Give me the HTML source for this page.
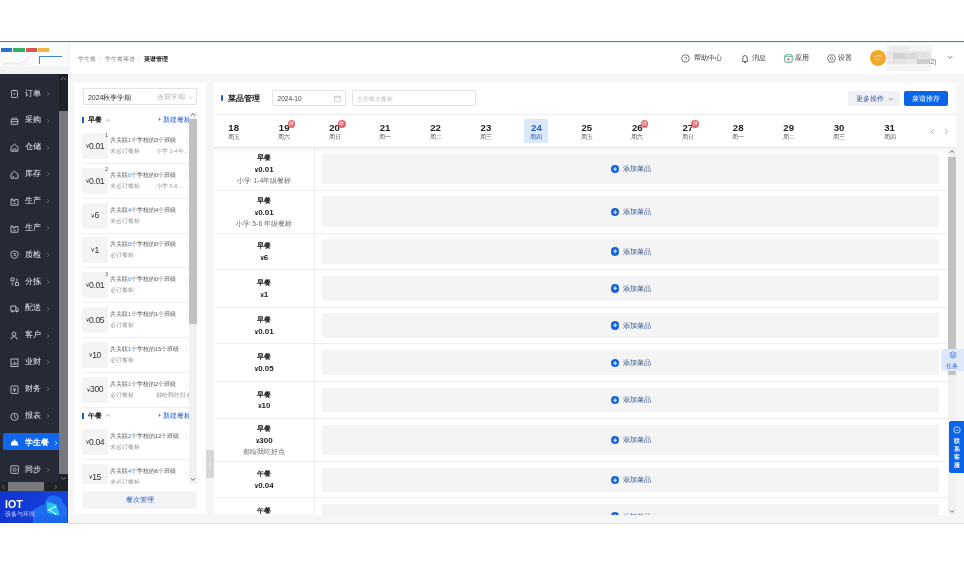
<!DOCTYPE html><html><head><meta charset="utf-8"><style>
*{box-sizing:border-box;margin:0;padding:0}
html,body{width:964px;height:565px;overflow:hidden;background:#fff;font-family:"Liberation Sans", sans-serif;}
.ab{position:absolute}
.t{position:absolute;white-space:nowrap;line-height:1}
</style></head><body><div id="root" style="position:absolute;left:0;top:0;width:964px;height:565px;overflow:hidden;will-change:transform">
<div class="ab" style="left:0;top:41px;width:964px;height:1px;background:#5e7a70"></div><div class="ab" style="left:0;top:42px;width:964px;height:1px;background:#eefaf7"></div><div class="ab" style="left:0;top:43px;width:68px;height:30px;background:#f9fbfc"></div>
<div class="ab" style="left:1px;top:48px;width:11px;height:3.6px;background:#2a72d0"></div>
<div class="ab" style="left:12.7px;top:48px;width:12px;height:3.6px;background:#2fb060"></div>
<div class="ab" style="left:26px;top:48px;width:11px;height:3.6px;background:#dc5555"></div>
<div class="ab" style="left:38px;top:48px;width:11px;height:3.6px;background:#eeb640"></div>
<div class="ab" style="left:39px;top:55.8px;width:23px;height:1px;background:#3f86cc"></div><svg class="ab" style="left:0;top:52px" width="68" height="14" viewBox="0 0 68 14"><path d="M2 12 L10 11 L18 11.5 L26 10 L30 4" fill="none" stroke="#e9c9c9" stroke-width="0.5"/><path d="M2 12.5 L12 12 L22 12.5 L34 12" fill="none" stroke="#dde3ea" stroke-width="0.5"/></svg>
<div class="ab" style="left:39px;top:56px;width:1px;height:7.5px;background:#3f86cc"></div>
<div class="ab" style="left:0;top:66px;width:68px;height:8px;background:#f3f4f5"></div>
<div class="ab" style="left:67.5px;top:42px;width:1px;height:31px;background:#eef0f2"></div>
<div class="t" style="left:77.7px;top:55.8px;font-size:6px;color:#8c8c8c">学生餐</div>
<div class="t" style="left:99px;top:55.8px;font-size:6px;color:#c8c8c8">/</div>
<div class="t" style="left:105px;top:55.8px;font-size:6px;color:#8c8c8c">学生餐菜谱</div>
<div class="t" style="left:138px;top:55.8px;font-size:6px;color:#c8c8c8">/</div>
<div class="t" style="left:144px;top:55.8px;font-size:6px;color:#222;font-weight:bold">菜谱管理</div>
<svg class="ab" style="left:681px;top:54px" width="9" height="9" viewBox="0 0 9 9"><circle cx="4.5" cy="4.5" r="3.8" fill="none" stroke="#555" stroke-width="0.8"/><text x="4.5" y="6.6" font-size="5.5" text-anchor="middle" fill="#555" font-family="Liberation Sans">?</text></svg>
<div class="t" style="left:694.4px;top:55px;font-size:6.9px;color:#333">帮助中心</div>
<svg class="ab" style="left:741px;top:53.5px" width="8" height="10" viewBox="0 0 8 10"><path d="M1.2 7.5 L1.8 6.5 L1.8 4 Q1.8 1.5 4 1.5 Q6.2 1.5 6.2 4 L6.2 6.5 L6.8 7.5 Z" fill="none" stroke="#444" stroke-width="0.8"/><path d="M3 8.6 L5 8.6" stroke="#444" stroke-width="0.8"/></svg>
<div class="t" style="left:752px;top:55px;font-size:6.6px;color:#333">消息</div>
<svg class="ab" style="left:783.5px;top:54px" width="9" height="9" viewBox="0 0 9 9"><rect x="0.8" y="0.8" width="7.4" height="7.4" rx="1.2" fill="none" stroke="#3fa08a" stroke-width="0.9"/><line x1="0.8" y1="2.6" x2="8.2" y2="2.6" stroke="#3fa08a" stroke-width="0.7"/><circle cx="4.5" cy="5.4" r="1.1" fill="#d84a5a"/></svg>
<div class="t" style="left:794.7px;top:55px;font-size:6.9px;color:#333">应用</div>
<svg class="ab" style="left:826.5px;top:53.8px" width="9" height="9" viewBox="0 0 9 9"><path d="M2.3 0.9 L6.7 0.9 L8.6 4.5 L6.7 8.1 L2.3 8.1 L0.4 4.5 Z" fill="none" stroke="#555" stroke-width="0.8"/><circle cx="4.5" cy="4.5" r="1.4" fill="none" stroke="#555" stroke-width="0.8"/></svg>
<div class="t" style="left:838px;top:55px;font-size:6.9px;color:#333">设置</div>
<div class="ab" style="left:869.8px;top:50.3px;width:16px;height:16px;border-radius:50%;background:#f4a829"></div>
<svg class="ab" style="left:869.8px;top:50.3px" width="16" height="16" viewBox="0 0 16 16"><path d="M4 7 Q8 4 12 6.5" fill="none" stroke="#fbe0b0" stroke-width="1"/><path d="M5 9.5 Q8 8 10 10" fill="none" stroke="#f8d49a" stroke-width="0.8"/></svg>
<div class="ab" style="left:886px;top:45px;width:46px;height:26px;background:#f3f4f3"></div>
<div class="ab" style="left:889px;top:45.5px;width:20px;height:6px;background:#eceeec"></div>
<div class="ab" style="left:887px;top:51px;width:44px;height:13px;background:#e8e8e8"></div>
<div class="ab" style="left:893px;top:52.5px;width:12px;height:6px;background:#d3d3d3"></div>
<div class="ab" style="left:905px;top:52.5px;width:12px;height:6px;background:#dadada"></div>
<div class="ab" style="left:917px;top:52px;width:10px;height:6px;background:#e2e2e2"></div>
<div class="ab" style="left:893px;top:58.5px;width:12px;height:5px;background:#e3e3e3"></div>
<div class="ab" style="left:917px;top:59px;width:13px;height:5px;background:#cdcdcd"></div>
<div class="ab" style="left:887px;top:64px;width:45px;height:6px;background:#f5f5f5"></div>
<div class="t" style="left:930.5px;top:58.5px;font-size:6.8px;color:#777">2)</div>
<svg class="ab" style="left:946.5px;top:55.3px" width="6" height="5" viewBox="0 0 6 5"><path d="M0.8 1.2 L3 3.4 L5.2 1.2" fill="none" stroke="#555" stroke-width="0.8"/></svg>
<div class="ab" style="left:68px;top:74px;width:896px;height:449px;background:#f6f6f7"></div><div class="ab" style="left:68px;top:522.6px;width:896px;height:1px;background:#dedede"></div><div class="ab" style="left:0;top:74px;width:68px;height:417px;background:#252a36;overflow:hidden"><svg class="ab" style="left:10.3px;top:15.20px" width="9" height="9.4" viewBox="0 0 9 9.4"><rect x="1.5" y="1.5" width="6" height="7" rx="0.8" fill="none" stroke="#d8dbe2" stroke-width="0.8"/><path d="M3.2 0.8 V2.2 M5.8 0.8 V2.2" stroke="#d8dbe2" stroke-width="0.8"/><path d="M3.8 4 L5.6 5 L3.8 6 Z" fill="#d8dbe2"/></svg><div class="t" style="left:24.8px;top:15.60px;font-size:8px;color:#eceef2;font-weight:normal">订单</div><svg class="ab" style="left:45.8px;top:16.80px" width="4" height="6" viewBox="0 0 4 6"><path d="M1 1 L3 3 L1 5" fill="none" stroke="#6f7480" stroke-width="0.7"/></svg><svg class="ab" style="left:10.3px;top:42.06px" width="9" height="9.4" viewBox="0 0 9 9.4"><path d="M1.2 3.2 H7.8 V8.3 H1.2 Z M1.2 5.6 H7.8" fill="none" stroke="#d8dbe2" stroke-width="0.8"/><path d="M3 3.2 V1.2 M6 3.2 V1.2" stroke="#d8dbe2" stroke-width="0.8"/></svg><div class="t" style="left:24.8px;top:42.46px;font-size:8px;color:#eceef2;font-weight:normal">采购</div><svg class="ab" style="left:45.8px;top:43.66px" width="4" height="6" viewBox="0 0 4 6"><path d="M1 1 L3 3 L1 5" fill="none" stroke="#6f7480" stroke-width="0.7"/></svg><svg class="ab" style="left:10.3px;top:68.92px" width="9" height="9.4" viewBox="0 0 9 9.4"><path d="M1 8.2 V4 L4.5 1.2 L8 4 V8.2 Z" fill="none" stroke="#d8dbe2" stroke-width="0.8"/><path d="M3 8.2 V6 H6 V8.2" fill="none" stroke="#d8dbe2" stroke-width="0.7"/></svg><div class="t" style="left:24.8px;top:69.32px;font-size:8px;color:#eceef2;font-weight:normal">仓储</div><svg class="ab" style="left:45.8px;top:70.52px" width="4" height="6" viewBox="0 0 4 6"><path d="M1 1 L3 3 L1 5" fill="none" stroke="#6f7480" stroke-width="0.7"/></svg><svg class="ab" style="left:10.3px;top:95.78px" width="9" height="9.4" viewBox="0 0 9 9.4"><path d="M1 8.2 V4 L4.5 1.2 L8 4 V8.2 Z" fill="none" stroke="#d8dbe2" stroke-width="0.8"/><circle cx="3.5" cy="6.5" r="0.6" fill="#d8dbe2"/></svg><div class="t" style="left:24.8px;top:96.18px;font-size:8px;color:#eceef2;font-weight:normal">库存</div><svg class="ab" style="left:45.8px;top:97.38px" width="4" height="6" viewBox="0 0 4 6"><path d="M1 1 L3 3 L1 5" fill="none" stroke="#6f7480" stroke-width="0.7"/></svg><svg class="ab" style="left:10.3px;top:122.64px" width="9" height="9.4" viewBox="0 0 9 9.4"><path d="M1 8.2 V2 H3 V4 H5 V2.5 H8 V8.2 Z" fill="none" stroke="#d8dbe2" stroke-width="0.8"/><path d="M3 6.3 H6" stroke="#d8dbe2" stroke-width="0.7"/></svg><div class="t" style="left:24.8px;top:123.04px;font-size:8px;color:#eceef2;font-weight:normal">生产</div><svg class="ab" style="left:45.8px;top:124.24px" width="4" height="6" viewBox="0 0 4 6"><path d="M1 1 L3 3 L1 5" fill="none" stroke="#6f7480" stroke-width="0.7"/></svg><svg class="ab" style="left:10.3px;top:149.50px" width="9" height="9.4" viewBox="0 0 9 9.4"><path d="M1 8.2 V2 H3 V4 H5 V2.5 H8 V8.2 Z" fill="none" stroke="#d8dbe2" stroke-width="0.8"/><path d="M3 6.3 H6" stroke="#d8dbe2" stroke-width="0.7"/></svg><div class="t" style="left:24.8px;top:149.90px;font-size:8px;color:#eceef2;font-weight:normal">生产</div><svg class="ab" style="left:45.8px;top:151.10px" width="4" height="6" viewBox="0 0 4 6"><path d="M1 1 L3 3 L1 5" fill="none" stroke="#6f7480" stroke-width="0.7"/></svg><svg class="ab" style="left:10.3px;top:176.36px" width="9" height="9.4" viewBox="0 0 9 9.4"><path d="M4.5 0.9 L8 2.2 V5 Q8 7.6 4.5 8.6 Q1 7.6 1 5 V2.2 Z" fill="none" stroke="#d8dbe2" stroke-width="0.8"/><path d="M3.2 3.5 H5.6 L4 5.6 H5.8" fill="none" stroke="#d8dbe2" stroke-width="0.7"/></svg><div class="t" style="left:24.8px;top:176.76px;font-size:8px;color:#eceef2;font-weight:normal">质检</div><svg class="ab" style="left:45.8px;top:177.96px" width="4" height="6" viewBox="0 0 4 6"><path d="M1 1 L3 3 L1 5" fill="none" stroke="#6f7480" stroke-width="0.7"/></svg><svg class="ab" style="left:10.3px;top:203.22px" width="9" height="9.4" viewBox="0 0 9 9.4"><path d="M1 1 H4 V4 H1 Z M5.5 5.5 H8.5 V8.5 H5.5 Z" fill="none" stroke="#d8dbe2" stroke-width="0.8"/><path d="M6 1.5 L8 3 L6 4.5 M3.5 5.5 L1.5 7 L3.5 8.5" fill="none" stroke="#d8dbe2" stroke-width="0.7"/></svg><div class="t" style="left:24.8px;top:203.62px;font-size:8px;color:#eceef2;font-weight:normal">分拣</div><svg class="ab" style="left:45.8px;top:204.82px" width="4" height="6" viewBox="0 0 4 6"><path d="M1 1 L3 3 L1 5" fill="none" stroke="#6f7480" stroke-width="0.7"/></svg><svg class="ab" style="left:10.3px;top:230.08px" width="9" height="9.4" viewBox="0 0 9 9.4"><path d="M0.8 2 H5.8 V7 H0.8 Z M5.8 4 H7.8 L8.6 5.5 V7 H5.8" fill="none" stroke="#d8dbe2" stroke-width="0.8"/><circle cx="2.5" cy="7.6" r="0.8" fill="#d8dbe2"/><circle cx="6.8" cy="7.6" r="0.8" fill="#d8dbe2"/></svg><div class="t" style="left:24.8px;top:230.48px;font-size:8px;color:#eceef2;font-weight:normal">配送</div><svg class="ab" style="left:45.8px;top:231.68px" width="4" height="6" viewBox="0 0 4 6"><path d="M1 1 L3 3 L1 5" fill="none" stroke="#6f7480" stroke-width="0.7"/></svg><svg class="ab" style="left:10.3px;top:256.94px" width="9" height="9.4" viewBox="0 0 9 9.4"><circle cx="4" cy="3" r="1.9" fill="none" stroke="#d8dbe2" stroke-width="0.8"/><path d="M0.9 8.5 Q1.2 5.6 4 5.6 Q6.8 5.6 7.1 8.5" fill="none" stroke="#d8dbe2" stroke-width="0.8"/></svg><div class="t" style="left:24.8px;top:257.34px;font-size:8px;color:#eceef2;font-weight:normal">客户</div><svg class="ab" style="left:45.8px;top:258.54px" width="4" height="6" viewBox="0 0 4 6"><path d="M1 1 L3 3 L1 5" fill="none" stroke="#6f7480" stroke-width="0.7"/></svg><svg class="ab" style="left:10.3px;top:283.80px" width="9" height="9.4" viewBox="0 0 9 9.4"><rect x="1" y="1" width="7" height="7.5" fill="none" stroke="#d8dbe2" stroke-width="0.8"/><path d="M3 7 V5 M4.5 7 V3.5 M6 7 V4.5" stroke="#d8dbe2" stroke-width="0.7"/></svg><div class="t" style="left:24.8px;top:284.20px;font-size:8px;color:#eceef2;font-weight:normal">业财</div><svg class="ab" style="left:45.8px;top:285.40px" width="4" height="6" viewBox="0 0 4 6"><path d="M1 1 L3 3 L1 5" fill="none" stroke="#6f7480" stroke-width="0.7"/></svg><svg class="ab" style="left:10.3px;top:310.66px" width="9" height="9.4" viewBox="0 0 9 9.4"><rect x="1" y="1" width="7" height="7.5" rx="0.8" fill="none" stroke="#d8dbe2" stroke-width="0.8"/><path d="M3 3 L4.5 4.8 L6 3 M3 5 H6 M4.5 4.8 V7" fill="none" stroke="#d8dbe2" stroke-width="0.7"/></svg><div class="t" style="left:24.8px;top:311.06px;font-size:8px;color:#eceef2;font-weight:normal">财务</div><svg class="ab" style="left:45.8px;top:312.26px" width="4" height="6" viewBox="0 0 4 6"><path d="M1 1 L3 3 L1 5" fill="none" stroke="#6f7480" stroke-width="0.7"/></svg><svg class="ab" style="left:10.3px;top:337.52px" width="9" height="9.4" viewBox="0 0 9 9.4"><circle cx="4.5" cy="4.8" r="3.6" fill="none" stroke="#d8dbe2" stroke-width="0.8"/><path d="M4.5 2.5 V4.8 L6 6.2" fill="none" stroke="#d8dbe2" stroke-width="0.8"/></svg><div class="t" style="left:24.8px;top:337.92px;font-size:8px;color:#eceef2;font-weight:normal">报表</div><svg class="ab" style="left:45.8px;top:339.12px" width="4" height="6" viewBox="0 0 4 6"><path d="M1 1 L3 3 L1 5" fill="none" stroke="#6f7480" stroke-width="0.7"/></svg><div class="ab" style="left:3.4px;top:359.3px;width:60px;height:17.2px;background:#1266ec;border-radius:1.5px"></div><svg class="ab" style="left:10.3px;top:364.38px" width="9" height="9.4" viewBox="0 0 9 9.4"><path d="M0.8 7.6 H8.2 Q8.2 2.4 4.5 2.4 Q0.8 2.4 0.8 7.6 Z" fill="#fff"/><circle cx="4.5" cy="2" r="0.7" fill="#fff"/></svg><div class="t" style="left:24.8px;top:364.78px;font-size:8px;color:#fff;font-weight:bold">学生餐</div><svg class="ab" style="left:53.8px;top:365.98px" width="4" height="6" viewBox="0 0 4 6"><path d="M1 1 L3 3 L1 5" fill="none" stroke="#fff" stroke-width="0.7"/></svg><svg class="ab" style="left:10.3px;top:391.24px" width="9" height="9.4" viewBox="0 0 9 9.4"><rect x="0.8" y="0.8" width="7.6" height="7.6" rx="0.8" fill="none" stroke="#d8dbe2" stroke-width="0.8"/><circle cx="4.6" cy="4.6" r="1.6" fill="none" stroke="#d8dbe2" stroke-width="0.8"/></svg><div class="t" style="left:24.8px;top:391.64px;font-size:8px;color:#eceef2;font-weight:normal">同步</div><svg class="ab" style="left:45.8px;top:392.84px" width="4" height="6" viewBox="0 0 4 6"><path d="M1 1 L3 3 L1 5" fill="none" stroke="#6f7480" stroke-width="0.7"/></svg><div class="ab" style="left:59px;top:0;width:9px;height:417px;background:#1f2229"></div><div class="ab" style="left:59px;top:37px;width:9px;height:363px;background:#77797f"></div><svg class="ab" style="left:60px;top:1.5px" width="7" height="5" viewBox="0 0 7 5"><path d="M1 4 L3.5 1.5 L6 4" fill="none" stroke="#8a8d94" stroke-width="0.9"/></svg><svg class="ab" style="left:60px;top:402px" width="7" height="5" viewBox="0 0 7 5"><path d="M1 1 L3.5 3.5 L6 1" fill="none" stroke="#8a8d94" stroke-width="0.9"/></svg><div class="ab" style="left:0;top:408px;width:68px;height:9px;background:#1f2229"></div><div class="ab" style="left:7.6px;top:408px;width:36.5px;height:9px;background:#77797f"></div><svg class="ab" style="left:1px;top:409.5px" width="5" height="6" viewBox="0 0 5 6"><path d="M3.5 1 L1.5 3 L3.5 5" fill="none" stroke="#777" stroke-width="0.8"/></svg><svg class="ab" style="left:53px;top:409.5px" width="5" height="6" viewBox="0 0 5 6"><path d="M1.5 1 L3.5 3 L1.5 5" fill="none" stroke="#777" stroke-width="0.8"/></svg></div><div class="ab" style="left:0;top:491px;width:68px;height:31.5px;background:linear-gradient(90deg,#1235cf,#1742dc);overflow:hidden">
<svg class="ab" style="left:0;top:0" width="68" height="32" viewBox="0 0 68 32">
<path d="M33 32 L33 22 Q33 17 38 16.5 Q40 13.5 44.5 14.2 Q45.5 4.5 53.5 4.3 Q61.5 4.5 63 12 Q67 14 67 20 L67 32 Z" fill="#1f6ef0"/>
<path d="M36 32 L36 26 Q45 22 52 27 L60 25 L66 27 L66 32 Z" fill="#1a62e6" opacity="0.7"/>
<path d="M46.5 10.5 L56.5 13.6 L59.8 24.6 L47.2 21.8 Z" fill="#26c4ee"/>
<path d="M49.3 18.7 L55 15.8 M49.3 18.7 L55.6 23" stroke="#e8fbff" stroke-width="0.9"/><circle cx="49.3" cy="18.7" r="1" fill="#fff"/><circle cx="55" cy="15.8" r="0.9" fill="#fff"/><circle cx="55.6" cy="23" r="0.9" fill="#fff"/>
</svg>
<div class="t" style="left:5px;top:7.6px;font-size:10.6px;color:#fff;font-weight:bold">IOT</div>
<div class="t" style="left:5.2px;top:21.2px;font-size:5.8px;color:#c8d8ff">设备与环境</div>
</div><div class="ab" style="left:74.2px;top:82.7px;width:132px;height:431.8px;background:#fff"></div><div class="ab" style="left:82.5px;top:88.2px;width:114.5px;height:16.4px;border:0.6px solid #dfe2e8;border-radius:2px"></div>
<div class="t" style="left:87.9px;top:94px;font-size:7px;color:#333">2024秋季学期</div>
<div class="t" style="left:156.6px;top:94px;font-size:6.8px;color:#b4b6ba">当前学期</div>
<svg class="ab" style="left:187.5px;top:95px" width="6" height="5" viewBox="0 0 6 5"><path d="M1 1.2 L3 3.4 L5 1.2" fill="none" stroke="#bbb" stroke-width="0.7"/></svg>
<div class="ab" style="left:74.2px;top:110px;width:123.3px;height:374px;overflow:hidden"><div class="ab" style="left:7.80px;top:6.80px;width:1.8px;height:6.6px;background:#1a5fd0"></div><div class="t" style="left:13.80px;top:7.20px;font-size:6.8px;color:#222;font-weight:bold">早餐</div><svg class="ab" style="left:30.80px;top:7.60px" width="6" height="5" viewBox="0 0 6 5"><path d="M1 3.5 L3 1.5 L5 3.5" fill="none" stroke="#888" stroke-width="0.7"/></svg><div class="t" style="left:83.40px;top:7.30px;font-size:6.6px;color:#1d62d0">+ 新建餐标</div><div class="ab" style="left:8.30px;top:23.00px;width:25.2px;height:26px;background:#f4f4f5;border-radius:1.5px;display:flex;align-items:center;justify-content:center;color:#333;white-space:nowrap;line-height:1"><span style="font-size:5.5px;margin-top:1.5px">¥</span><span style="font-size:8.6px;letter-spacing:-0.4px">0.01</span></div><div class="t" style="left:31.10px;top:22.50px;font-size:5px;color:#555">1</div><div class="t" style="left:35.80px;top:28.00px;font-size:5.6px;color:#505050">共关联<span style="color:#3b7ddd">1</span>个学校的3个班级</div><div class="t" style="left:35.80px;top:39.00px;font-size:5.6px;color:#999">未必订餐标</div><div class="t" style="left:81.80px;top:39.00px;font-size:5.6px;color:#999">小学 1-4年...</div><div class="t" style="left:110.30px;top:27.50px;font-size:6px;color:#ccc">⋮</div><div class="ab" style="left:8.30px;top:53.00px;width:107px;height:0.6px;background:#eeeff1"></div><div class="ab" style="left:8.30px;top:57.80px;width:25.2px;height:26px;background:#f4f4f5;border-radius:1.5px;display:flex;align-items:center;justify-content:center;color:#333;white-space:nowrap;line-height:1"><span style="font-size:5.5px;margin-top:1.5px">¥</span><span style="font-size:8.6px;letter-spacing:-0.4px">0.01</span></div><div class="t" style="left:31.10px;top:57.30px;font-size:5px;color:#555">2</div><div class="t" style="left:35.80px;top:62.80px;font-size:5.6px;color:#505050">共关联<span style="color:#3b7ddd">0</span>个学校的0个班级</div><div class="t" style="left:35.80px;top:73.80px;font-size:5.6px;color:#999">未必订餐标</div><div class="t" style="left:81.80px;top:73.80px;font-size:5.6px;color:#999">小学 5-6 ...</div><div class="t" style="left:110.30px;top:62.30px;font-size:6px;color:#ccc">⋮</div><div class="ab" style="left:8.30px;top:87.80px;width:107px;height:0.6px;background:#eeeff1"></div><div class="ab" style="left:8.30px;top:92.60px;width:25.2px;height:26px;background:#f4f4f5;border-radius:1.5px;display:flex;align-items:center;justify-content:center;color:#333;white-space:nowrap;line-height:1"><span style="font-size:5.5px;margin-top:1.5px">¥</span><span style="font-size:8.6px;letter-spacing:-0.4px">6</span></div><div class="t" style="left:35.80px;top:97.60px;font-size:5.6px;color:#505050">共关联<span style="color:#3b7ddd">4</span>个学校的4个班级</div><div class="t" style="left:35.80px;top:108.60px;font-size:5.6px;color:#999">未必订餐标</div><div class="t" style="left:110.30px;top:97.10px;font-size:6px;color:#ccc">⋮</div><div class="ab" style="left:8.30px;top:122.60px;width:107px;height:0.6px;background:#eeeff1"></div><div class="ab" style="left:8.30px;top:127.40px;width:25.2px;height:26px;background:#f4f4f5;border-radius:1.5px;display:flex;align-items:center;justify-content:center;color:#333;white-space:nowrap;line-height:1"><span style="font-size:5.5px;margin-top:1.5px">¥</span><span style="font-size:8.6px;letter-spacing:-0.4px">1</span></div><div class="t" style="left:35.80px;top:132.40px;font-size:5.6px;color:#505050">共关联<span style="color:#3b7ddd">0</span>个学校的0个班级</div><div class="t" style="left:35.80px;top:143.40px;font-size:5.6px;color:#999">必订餐标</div><div class="t" style="left:110.30px;top:131.90px;font-size:6px;color:#ccc">⋮</div><div class="ab" style="left:8.30px;top:157.40px;width:107px;height:0.6px;background:#eeeff1"></div><div class="ab" style="left:8.30px;top:162.20px;width:25.2px;height:26px;background:#f4f4f5;border-radius:1.5px;display:flex;align-items:center;justify-content:center;color:#333;white-space:nowrap;line-height:1"><span style="font-size:5.5px;margin-top:1.5px">¥</span><span style="font-size:8.6px;letter-spacing:-0.4px">0.01</span></div><div class="t" style="left:31.10px;top:161.70px;font-size:5px;color:#555">3</div><div class="t" style="left:35.80px;top:167.20px;font-size:5.6px;color:#505050">共关联<span style="color:#3b7ddd">0</span>个学校的0个班级</div><div class="t" style="left:35.80px;top:178.20px;font-size:5.6px;color:#999">必订餐标</div><div class="t" style="left:110.30px;top:166.70px;font-size:6px;color:#ccc">⋮</div><div class="ab" style="left:8.30px;top:192.20px;width:107px;height:0.6px;background:#eeeff1"></div><div class="ab" style="left:8.30px;top:197.00px;width:25.2px;height:26px;background:#f4f4f5;border-radius:1.5px;display:flex;align-items:center;justify-content:center;color:#333;white-space:nowrap;line-height:1"><span style="font-size:5.5px;margin-top:1.5px">¥</span><span style="font-size:8.6px;letter-spacing:-0.4px">0.05</span></div><div class="t" style="left:35.80px;top:202.00px;font-size:5.6px;color:#505050">共关联<span style="color:#3b7ddd">1</span>个学校的1个班级</div><div class="t" style="left:35.80px;top:213.00px;font-size:5.6px;color:#999">必订餐标</div><div class="t" style="left:110.30px;top:201.50px;font-size:6px;color:#ccc">⋮</div><div class="ab" style="left:8.30px;top:227.00px;width:107px;height:0.6px;background:#eeeff1"></div><div class="ab" style="left:8.30px;top:231.80px;width:25.2px;height:26px;background:#f4f4f5;border-radius:1.5px;display:flex;align-items:center;justify-content:center;color:#333;white-space:nowrap;line-height:1"><span style="font-size:5.5px;margin-top:1.5px">¥</span><span style="font-size:8.6px;letter-spacing:-0.4px">10</span></div><div class="t" style="left:35.80px;top:236.80px;font-size:5.6px;color:#505050">共关联<span style="color:#3b7ddd">1</span>个学校的15个班级</div><div class="t" style="left:35.80px;top:247.80px;font-size:5.6px;color:#999">必订餐标</div><div class="t" style="left:110.30px;top:236.30px;font-size:6px;color:#ccc">⋮</div><div class="ab" style="left:8.30px;top:261.80px;width:107px;height:0.6px;background:#eeeff1"></div><div class="ab" style="left:8.30px;top:266.60px;width:25.2px;height:26px;background:#f4f4f5;border-radius:1.5px;display:flex;align-items:center;justify-content:center;color:#333;white-space:nowrap;line-height:1"><span style="font-size:5.5px;margin-top:1.5px">¥</span><span style="font-size:8.6px;letter-spacing:-0.4px">300</span></div><div class="t" style="left:35.80px;top:271.60px;font-size:5.6px;color:#505050">共关联<span style="color:#3b7ddd">1</span>个学校的2个班级</div><div class="t" style="left:35.80px;top:282.60px;font-size:5.6px;color:#999">必订餐标</div><div class="t" style="left:81.80px;top:282.60px;font-size:5.6px;color:#999">都给我吃好点</div><div class="t" style="left:110.30px;top:271.10px;font-size:6px;color:#ccc">⋮</div><div class="ab" style="left:8.30px;top:296.60px;width:107px;height:0.6px;background:#eeeff1"></div><div class="ab" style="left:7.80px;top:302.60px;width:1.8px;height:6.6px;background:#1a5fd0"></div><div class="t" style="left:13.80px;top:303.00px;font-size:6.8px;color:#222;font-weight:bold">午餐</div><svg class="ab" style="left:30.80px;top:303.40px" width="6" height="5" viewBox="0 0 6 5"><path d="M1 3.5 L3 1.5 L5 3.5" fill="none" stroke="#888" stroke-width="0.7"/></svg><div class="t" style="left:83.40px;top:303.10px;font-size:6.6px;color:#1d62d0">+ 新建餐标</div><div class="ab" style="left:8.30px;top:319.20px;width:25.2px;height:26px;background:#f4f4f5;border-radius:1.5px;display:flex;align-items:center;justify-content:center;color:#333;white-space:nowrap;line-height:1"><span style="font-size:5.5px;margin-top:1.5px">¥</span><span style="font-size:8.6px;letter-spacing:-0.4px">0.04</span></div><div class="t" style="left:35.80px;top:324.20px;font-size:5.6px;color:#505050">共关联<span style="color:#3b7ddd">2</span>个学校的12个班级</div><div class="t" style="left:35.80px;top:335.20px;font-size:5.6px;color:#999">未必订餐标</div><div class="t" style="left:110.30px;top:323.70px;font-size:6px;color:#ccc">⋮</div><div class="ab" style="left:8.30px;top:349.20px;width:107px;height:0.6px;background:#eeeff1"></div><div class="ab" style="left:8.30px;top:354.00px;width:25.2px;height:26px;background:#f4f4f5;border-radius:1.5px;display:flex;align-items:center;justify-content:center;color:#333;white-space:nowrap;line-height:1"><span style="font-size:5.5px;margin-top:1.5px">¥</span><span style="font-size:8.6px;letter-spacing:-0.4px">15</span></div><div class="t" style="left:35.80px;top:359.00px;font-size:5.6px;color:#505050">共关联<span style="color:#3b7ddd">4</span>个学校的6个班级</div><div class="t" style="left:35.80px;top:370.00px;font-size:5.6px;color:#999">未必订餐标</div><div class="t" style="left:110.30px;top:358.50px;font-size:6px;color:#ccc">⋮</div><div class="ab" style="left:8.30px;top:384.00px;width:107px;height:0.6px;background:#eeeff1"></div><div class="ab" style="left:114.80px;top:1.50px;width:8.4px;height:372.5px;background:#f1f1f1"></div><div class="ab" style="left:114.80px;top:8.80px;width:8.4px;height:205px;background:#c1c1c1"></div><svg class="ab" style="left:116.00px;top:2.00px" width="6" height="5" viewBox="0 0 6 5"><path d="M1 3.8 L3 1.6 L5 3.8" fill="none" stroke="#555" stroke-width="0.8"/></svg><svg class="ab" style="left:116.00px;top:367.00px" width="6" height="5" viewBox="0 0 6 5"><path d="M1 1.2 L3 3.4 L5 1.2" fill="none" stroke="#555" stroke-width="0.8"/></svg></div><div class="ab" style="left:82px;top:490.6px;width:115px;height:18px;background:#f2f3f5;border-radius:2px"></div><div class="t" style="left:82px;top:497px;width:115px;text-align:center;font-size:6.8px;color:#2a5fb5">餐次管理</div><div class="ab" style="left:205.5px;top:450.4px;width:8px;height:28px;background:#d6d6d6;border-radius:0 2px 2px 0"></div><svg class="ab" style="left:207.5px;top:461px" width="4" height="6" viewBox="0 0 4 6"><path d="M3 1 L1 3 L3 5" fill="none" stroke="#fff" stroke-width="0.8"/></svg><div class="ab" style="left:214px;top:82.7px;width:742px;height:432px;background:#fff"></div><div class="ab" style="left:221px;top:95px;width:2px;height:6.3px;background:#1a5fd0;border-radius:1px"></div><div class="t" style="left:227.6px;top:95.3px;font-size:8.1px;color:#222;font-weight:bold">菜品管理</div><div class="ab" style="left:271.6px;top:90.2px;width:74.7px;height:16.3px;border:0.6px solid #dfe2e8;border-radius:2px"></div>
<div class="t" style="left:277.5px;top:96.1px;font-size:6.6px;color:#444">2024-10</div>
<svg class="ab" style="left:333.5px;top:94.5px" width="7" height="7" viewBox="0 0 7 7"><rect x="0.6" y="1.2" width="5.8" height="5.2" fill="none" stroke="#bbb" stroke-width="0.6"/><path d="M0.6 2.8 H6.4 M2 0.3 V1.6 M5 0.3 V1.6" stroke="#bbb" stroke-width="0.6"/></svg>
<div class="ab" style="left:351.6px;top:90.2px;width:124.8px;height:16.3px;border:0.6px solid #dfe2e8;border-radius:2px"></div>
<div class="t" style="left:357px;top:96.1px;font-size:6.2px;color:#c0c2c6">全部餐次餐标</div>
<div class="ab" style="left:848px;top:91px;width:51.8px;height:15.4px;background:#eff1f5;border-radius:2px"></div>
<div class="t" style="left:855.5px;top:96.2px;font-size:6.6px;color:#2f5a9c">更多操作</div>
<svg class="ab" style="left:887.5px;top:96.8px" width="6" height="5" viewBox="0 0 6 5"><path d="M1 1.2 L3 3.4 L5 1.2" fill="none" stroke="#5a7ab0" stroke-width="0.7"/></svg>
<div class="ab" style="left:904.1px;top:90.6px;width:44px;height:15.5px;background:#0a64e8;border-radius:2px"></div>
<div class="t" style="left:904.1px;top:96px;width:44px;text-align:center;font-size:6.8px;color:#fff">菜谱推荐</div>
<div class="ab" style="left:214px;top:114px;width:742px;height:0.7px;background:#eceef1"></div><div class="t" style="left:218.70px;top:122.70px;width:30px;text-align:center;font-size:9.6px;font-weight:bold;color:#222">18</div><div class="t" style="left:218.70px;top:134.30px;width:30px;text-align:center;font-size:6px;color:#555">周五</div><div class="t" style="left:269.15px;top:122.70px;width:30px;text-align:center;font-size:9.6px;font-weight:bold;color:#222">19</div><div class="t" style="left:269.15px;top:134.30px;width:30px;text-align:center;font-size:6px;color:#555">周六</div><div class="ab" style="left:287.75px;top:120.3px;width:7.4px;height:7.4px;border-radius:50%;background:#e56a70;color:#fff;font-size:4.6px;line-height:7.4px;text-align:center">休</div><div class="t" style="left:319.60px;top:122.70px;width:30px;text-align:center;font-size:9.6px;font-weight:bold;color:#222">20</div><div class="t" style="left:319.60px;top:134.30px;width:30px;text-align:center;font-size:6px;color:#555">周日</div><div class="ab" style="left:338.20px;top:120.3px;width:7.4px;height:7.4px;border-radius:50%;background:#e56a70;color:#fff;font-size:4.6px;line-height:7.4px;text-align:center">休</div><div class="t" style="left:370.05px;top:122.70px;width:30px;text-align:center;font-size:9.6px;font-weight:bold;color:#222">21</div><div class="t" style="left:370.05px;top:134.30px;width:30px;text-align:center;font-size:6px;color:#555">周一</div><div class="t" style="left:420.50px;top:122.70px;width:30px;text-align:center;font-size:9.6px;font-weight:bold;color:#222">22</div><div class="t" style="left:420.50px;top:134.30px;width:30px;text-align:center;font-size:6px;color:#555">周二</div><div class="t" style="left:470.95px;top:122.70px;width:30px;text-align:center;font-size:9.6px;font-weight:bold;color:#222">23</div><div class="t" style="left:470.95px;top:134.30px;width:30px;text-align:center;font-size:6px;color:#555">周三</div><div class="ab" style="left:524.3px;top:119px;width:23.5px;height:23.6px;background:#dce7f8;border-radius:1px"></div><div class="t" style="left:521.40px;top:122.70px;width:30px;text-align:center;font-size:9.6px;font-weight:bold;color:#1b5fc9">24</div><div class="t" style="left:521.40px;top:134.30px;width:30px;text-align:center;font-size:6px;color:#1b5fc9">周四</div><div class="t" style="left:571.85px;top:122.70px;width:30px;text-align:center;font-size:9.6px;font-weight:bold;color:#222">25</div><div class="t" style="left:571.85px;top:134.30px;width:30px;text-align:center;font-size:6px;color:#555">周五</div><div class="t" style="left:622.30px;top:122.70px;width:30px;text-align:center;font-size:9.6px;font-weight:bold;color:#222">26</div><div class="t" style="left:622.30px;top:134.30px;width:30px;text-align:center;font-size:6px;color:#555">周六</div><div class="ab" style="left:640.90px;top:120.3px;width:7.4px;height:7.4px;border-radius:50%;background:#e56a70;color:#fff;font-size:4.6px;line-height:7.4px;text-align:center">休</div><div class="t" style="left:672.75px;top:122.70px;width:30px;text-align:center;font-size:9.6px;font-weight:bold;color:#222">27</div><div class="t" style="left:672.75px;top:134.30px;width:30px;text-align:center;font-size:6px;color:#555">周日</div><div class="ab" style="left:691.35px;top:120.3px;width:7.4px;height:7.4px;border-radius:50%;background:#e56a70;color:#fff;font-size:4.6px;line-height:7.4px;text-align:center">休</div><div class="t" style="left:723.20px;top:122.70px;width:30px;text-align:center;font-size:9.6px;font-weight:bold;color:#222">28</div><div class="t" style="left:723.20px;top:134.30px;width:30px;text-align:center;font-size:6px;color:#555">周一</div><div class="t" style="left:773.65px;top:122.70px;width:30px;text-align:center;font-size:9.6px;font-weight:bold;color:#222">29</div><div class="t" style="left:773.65px;top:134.30px;width:30px;text-align:center;font-size:6px;color:#555">周二</div><div class="t" style="left:824.10px;top:122.70px;width:30px;text-align:center;font-size:9.6px;font-weight:bold;color:#222">30</div><div class="t" style="left:824.10px;top:134.30px;width:30px;text-align:center;font-size:6px;color:#555">周三</div><div class="t" style="left:874.55px;top:122.70px;width:30px;text-align:center;font-size:9.6px;font-weight:bold;color:#222">31</div><div class="t" style="left:874.55px;top:134.30px;width:30px;text-align:center;font-size:6px;color:#555">周四</div><svg class="ab" style="left:929.5px;top:128px" width="5" height="7" viewBox="0 0 5 7"><path d="M3.8 1 L1.5 3.5 L3.8 6" fill="none" stroke="#888" stroke-width="0.7"/></svg><svg class="ab" style="left:943.5px;top:128px" width="5" height="7" viewBox="0 0 5 7"><path d="M1.2 1 L3.5 3.5 L1.2 6" fill="none" stroke="#888" stroke-width="0.7"/></svg><div class="ab" style="left:214px;top:146.8px;width:742px;height:0.8px;background:#e6e8eb"></div><div class="ab" style="left:214px;top:147.5px;width:742px;height:367.2px;overflow:hidden"><div class="ab" style="left:0;top:42.00px;width:734px;height:0.7px;background:#eceef1"></div><div class="ab" style="left:108.30px;top:6.20px;width:616.7px;height:30.30px;background:#f4f4f5;border-radius:1.5px"></div><div class="t" style="left:0;top:7.75px;width:100.6px;text-align:center;font-size:6.9px;font-weight:bold;color:#222">早餐</div><div class="t" style="left:0;top:18.45px;width:100.6px;text-align:center;font-size:8px;font-weight:bold;color:#222"><span style="font-size:6px">¥</span>0.01</div><div class="t" style="left:0;top:29.55px;width:100.6px;text-align:center;font-size:7px;color:#6e6e6e">小学 1-4年级餐标</div><div class="ab" style="left:396.80px;top:17.15px;width:8.4px;height:8.4px;border-radius:50%;background:#1760d8"></div><svg class="ab" style="left:396.80px;top:17.15px" width="8.4" height="8.4" viewBox="0 0 8.4 8.4"><path d="M4.2 2.2 V6.2 M2.2 4.2 H6.2" stroke="#fff" stroke-width="0.9"/></svg><div class="t" style="left:409.00px;top:18.65px;font-size:7.1px;color:#2e4d84">添加菜品</div><div class="ab" style="left:0;top:85.00px;width:734px;height:0.7px;background:#eceef1"></div><div class="ab" style="left:108.30px;top:48.90px;width:616.7px;height:30.60px;background:#f4f4f5;border-radius:1.5px"></div><div class="t" style="left:0;top:50.60px;width:100.6px;text-align:center;font-size:6.9px;font-weight:bold;color:#222">早餐</div><div class="t" style="left:0;top:61.30px;width:100.6px;text-align:center;font-size:8px;font-weight:bold;color:#222"><span style="font-size:6px">¥</span>0.01</div><div class="t" style="left:0;top:72.40px;width:100.6px;text-align:center;font-size:7px;color:#6e6e6e">小学 5-6 年级餐标</div><div class="ab" style="left:396.80px;top:60.00px;width:8.4px;height:8.4px;border-radius:50%;background:#1760d8"></div><svg class="ab" style="left:396.80px;top:60.00px" width="8.4" height="8.4" viewBox="0 0 8.4 8.4"><path d="M4.2 2.2 V6.2 M2.2 4.2 H6.2" stroke="#fff" stroke-width="0.9"/></svg><div class="t" style="left:409.00px;top:61.50px;font-size:7.1px;color:#2e4d84">添加菜品</div><div class="ab" style="left:0;top:121.80px;width:734px;height:0.7px;background:#eceef1"></div><div class="ab" style="left:108.30px;top:91.90px;width:616.7px;height:24.40px;background:#f4f4f5;border-radius:1.5px"></div><div class="t" style="left:0;top:95.70px;width:100.6px;text-align:center;font-size:6.9px;font-weight:bold;color:#222">早餐</div><div class="t" style="left:0;top:106.30px;width:100.6px;text-align:center;font-size:8px;font-weight:bold;color:#222"><span style="font-size:6px">¥</span>6</div><div class="ab" style="left:396.80px;top:99.90px;width:8.4px;height:8.4px;border-radius:50%;background:#1760d8"></div><svg class="ab" style="left:396.80px;top:99.90px" width="8.4" height="8.4" viewBox="0 0 8.4 8.4"><path d="M4.2 2.2 V6.2 M2.2 4.2 H6.2" stroke="#fff" stroke-width="0.9"/></svg><div class="t" style="left:409.00px;top:101.40px;font-size:7.1px;color:#2e4d84">添加菜品</div><div class="ab" style="left:0;top:159.00px;width:734px;height:0.7px;background:#eceef1"></div><div class="ab" style="left:108.30px;top:128.70px;width:616.7px;height:24.80px;background:#f4f4f5;border-radius:1.5px"></div><div class="t" style="left:0;top:132.70px;width:100.6px;text-align:center;font-size:6.9px;font-weight:bold;color:#222">早餐</div><div class="t" style="left:0;top:143.30px;width:100.6px;text-align:center;font-size:8px;font-weight:bold;color:#222"><span style="font-size:6px">¥</span>1</div><div class="ab" style="left:396.80px;top:136.90px;width:8.4px;height:8.4px;border-radius:50%;background:#1760d8"></div><svg class="ab" style="left:396.80px;top:136.90px" width="8.4" height="8.4" viewBox="0 0 8.4 8.4"><path d="M4.2 2.2 V6.2 M2.2 4.2 H6.2" stroke="#fff" stroke-width="0.9"/></svg><div class="t" style="left:409.00px;top:138.40px;font-size:7.1px;color:#2e4d84">添加菜品</div><div class="ab" style="left:0;top:195.80px;width:734px;height:0.7px;background:#eceef1"></div><div class="ab" style="left:108.30px;top:165.90px;width:616.7px;height:24.40px;background:#f4f4f5;border-radius:1.5px"></div><div class="t" style="left:0;top:169.70px;width:100.6px;text-align:center;font-size:6.9px;font-weight:bold;color:#222">早餐</div><div class="t" style="left:0;top:180.30px;width:100.6px;text-align:center;font-size:8px;font-weight:bold;color:#222"><span style="font-size:6px">¥</span>0.01</div><div class="ab" style="left:396.80px;top:173.90px;width:8.4px;height:8.4px;border-radius:50%;background:#1760d8"></div><svg class="ab" style="left:396.80px;top:173.90px" width="8.4" height="8.4" viewBox="0 0 8.4 8.4"><path d="M4.2 2.2 V6.2 M2.2 4.2 H6.2" stroke="#fff" stroke-width="0.9"/></svg><div class="t" style="left:409.00px;top:175.40px;font-size:7.1px;color:#2e4d84">添加菜品</div><div class="ab" style="left:0;top:233.30px;width:734px;height:0.7px;background:#eceef1"></div><div class="ab" style="left:108.30px;top:202.70px;width:616.7px;height:25.10px;background:#f4f4f5;border-radius:1.5px"></div><div class="t" style="left:0;top:206.85px;width:100.6px;text-align:center;font-size:6.9px;font-weight:bold;color:#222">早餐</div><div class="t" style="left:0;top:217.45px;width:100.6px;text-align:center;font-size:8px;font-weight:bold;color:#222"><span style="font-size:6px">¥</span>0.05</div><div class="ab" style="left:396.80px;top:211.05px;width:8.4px;height:8.4px;border-radius:50%;background:#1760d8"></div><svg class="ab" style="left:396.80px;top:211.05px" width="8.4" height="8.4" viewBox="0 0 8.4 8.4"><path d="M4.2 2.2 V6.2 M2.2 4.2 H6.2" stroke="#fff" stroke-width="0.9"/></svg><div class="t" style="left:409.00px;top:212.55px;font-size:7.1px;color:#2e4d84">添加菜品</div><div class="ab" style="left:0;top:270.20px;width:734px;height:0.7px;background:#eceef1"></div><div class="ab" style="left:108.30px;top:240.20px;width:616.7px;height:24.50px;background:#f4f4f5;border-radius:1.5px"></div><div class="t" style="left:0;top:244.05px;width:100.6px;text-align:center;font-size:6.9px;font-weight:bold;color:#222">早餐</div><div class="t" style="left:0;top:254.65px;width:100.6px;text-align:center;font-size:8px;font-weight:bold;color:#222"><span style="font-size:6px">¥</span>10</div><div class="ab" style="left:396.80px;top:248.25px;width:8.4px;height:8.4px;border-radius:50%;background:#1760d8"></div><svg class="ab" style="left:396.80px;top:248.25px" width="8.4" height="8.4" viewBox="0 0 8.4 8.4"><path d="M4.2 2.2 V6.2 M2.2 4.2 H6.2" stroke="#fff" stroke-width="0.9"/></svg><div class="t" style="left:409.00px;top:249.75px;font-size:7.1px;color:#2e4d84">添加菜品</div><div class="ab" style="left:0;top:313.20px;width:734px;height:0.7px;background:#eceef1"></div><div class="ab" style="left:108.30px;top:277.10px;width:616.7px;height:30.60px;background:#f4f4f5;border-radius:1.5px"></div><div class="t" style="left:0;top:278.80px;width:100.6px;text-align:center;font-size:6.9px;font-weight:bold;color:#222">早餐</div><div class="t" style="left:0;top:289.50px;width:100.6px;text-align:center;font-size:8px;font-weight:bold;color:#222"><span style="font-size:6px">¥</span>300</div><div class="t" style="left:0;top:300.60px;width:100.6px;text-align:center;font-size:7px;color:#6e6e6e">都给我吃好点</div><div class="ab" style="left:396.80px;top:288.20px;width:8.4px;height:8.4px;border-radius:50%;background:#1760d8"></div><svg class="ab" style="left:396.80px;top:288.20px" width="8.4" height="8.4" viewBox="0 0 8.4 8.4"><path d="M4.2 2.2 V6.2 M2.2 4.2 H6.2" stroke="#fff" stroke-width="0.9"/></svg><div class="t" style="left:409.00px;top:289.70px;font-size:7.1px;color:#2e4d84">添加菜品</div><div class="ab" style="left:0;top:349.90px;width:734px;height:0.7px;background:#eceef1"></div><div class="ab" style="left:108.30px;top:320.10px;width:616.7px;height:24.30px;background:#f4f4f5;border-radius:1.5px"></div><div class="t" style="left:0;top:323.85px;width:100.6px;text-align:center;font-size:6.9px;font-weight:bold;color:#222">午餐</div><div class="t" style="left:0;top:334.45px;width:100.6px;text-align:center;font-size:8px;font-weight:bold;color:#222"><span style="font-size:6px">¥</span>0.04</div><div class="ab" style="left:396.80px;top:328.05px;width:8.4px;height:8.4px;border-radius:50%;background:#1760d8"></div><svg class="ab" style="left:396.80px;top:328.05px" width="8.4" height="8.4" viewBox="0 0 8.4 8.4"><path d="M4.2 2.2 V6.2 M2.2 4.2 H6.2" stroke="#fff" stroke-width="0.9"/></svg><div class="t" style="left:409.00px;top:329.55px;font-size:7.1px;color:#2e4d84">添加菜品</div><div class="ab" style="left:0;top:386.60px;width:734px;height:0.7px;background:#eceef1"></div><div class="ab" style="left:108.30px;top:356.80px;width:616.7px;height:24.30px;background:#f4f4f5;border-radius:1.5px"></div><div class="t" style="left:0;top:360.55px;width:100.6px;text-align:center;font-size:6.9px;font-weight:bold;color:#222">午餐</div><div class="t" style="left:0;top:371.15px;width:100.6px;text-align:center;font-size:8px;font-weight:bold;color:#222"><span style="font-size:6px">¥</span></div><div class="ab" style="left:396.80px;top:364.75px;width:8.4px;height:8.4px;border-radius:50%;background:#1760d8"></div><svg class="ab" style="left:396.80px;top:364.75px" width="8.4" height="8.4" viewBox="0 0 8.4 8.4"><path d="M4.2 2.2 V6.2 M2.2 4.2 H6.2" stroke="#fff" stroke-width="0.9"/></svg><div class="t" style="left:409.00px;top:366.25px;font-size:7.1px;color:#2e4d84">添加菜品</div><div class="ab" style="left:100.30px;top:0;width:0.7px;height:367.2px;background:#eceef1"></div><div class="ab" style="left:734.20px;top:0;width:7.8px;height:367.2px;background:#f1f1f1"></div><div class="ab" style="left:734.20px;top:9.10px;width:7.8px;height:218px;background:#c1c1c1"></div><svg class="ab" style="left:735.10px;top:1.00px" width="6" height="5" viewBox="0 0 6 5"><path d="M1 3.8 L3 1.6 L5 3.8" fill="none" stroke="#555" stroke-width="0.8"/></svg><svg class="ab" style="left:735.10px;top:361.00px" width="6" height="5" viewBox="0 0 6 5"><path d="M1 1.2 L3 3.4 L5 1.2" fill="none" stroke="#555" stroke-width="0.8"/></svg><div class="ab" style="left:0;top:0;width:734px;height:7px;background:linear-gradient(rgba(0,0,0,0.035),rgba(0,0,0,0))"></div></div><div class="ab" style="left:941px;top:348.6px;width:23px;height:22.3px;background:#dde8fa;border-radius:3px 0 0 3px"></div>
<svg class="ab" style="left:948.5px;top:351px" width="8" height="8" viewBox="0 0 8 8"><path d="M4 0.8 L7.2 2.4 L4 4 L0.8 2.4 Z" fill="none" stroke="#3a6fd0" stroke-width="0.7"/><path d="M0.8 4 L4 5.6 L7.2 4 M0.8 5.6 L4 7.2 L7.2 5.6" fill="none" stroke="#3a6fd0" stroke-width="0.7"/></svg>
<div class="t" style="left:946px;top:363px;font-size:6px;color:#2d62c8">任务</div>
<div class="ab" style="left:949.1px;top:421px;width:14.9px;height:51.8px;background:#0a64e8;border-radius:2px 0 0 2px"></div>
<svg class="ab" style="left:952.5px;top:425.5px" width="8" height="8" viewBox="0 0 8 8"><circle cx="4" cy="4" r="3.2" fill="none" stroke="#fff" stroke-width="0.7"/><path d="M2.6 4.2 H5.4" stroke="#fff" stroke-width="0.6"/></svg>
<div class="ab" style="left:949.1px;top:436.5px;width:14.9px;font-size:5.6px;line-height:8.1px;color:#fff;text-align:center;font-weight:bold">联<br>系<br>客<br>服</div>
</div></body></html>
